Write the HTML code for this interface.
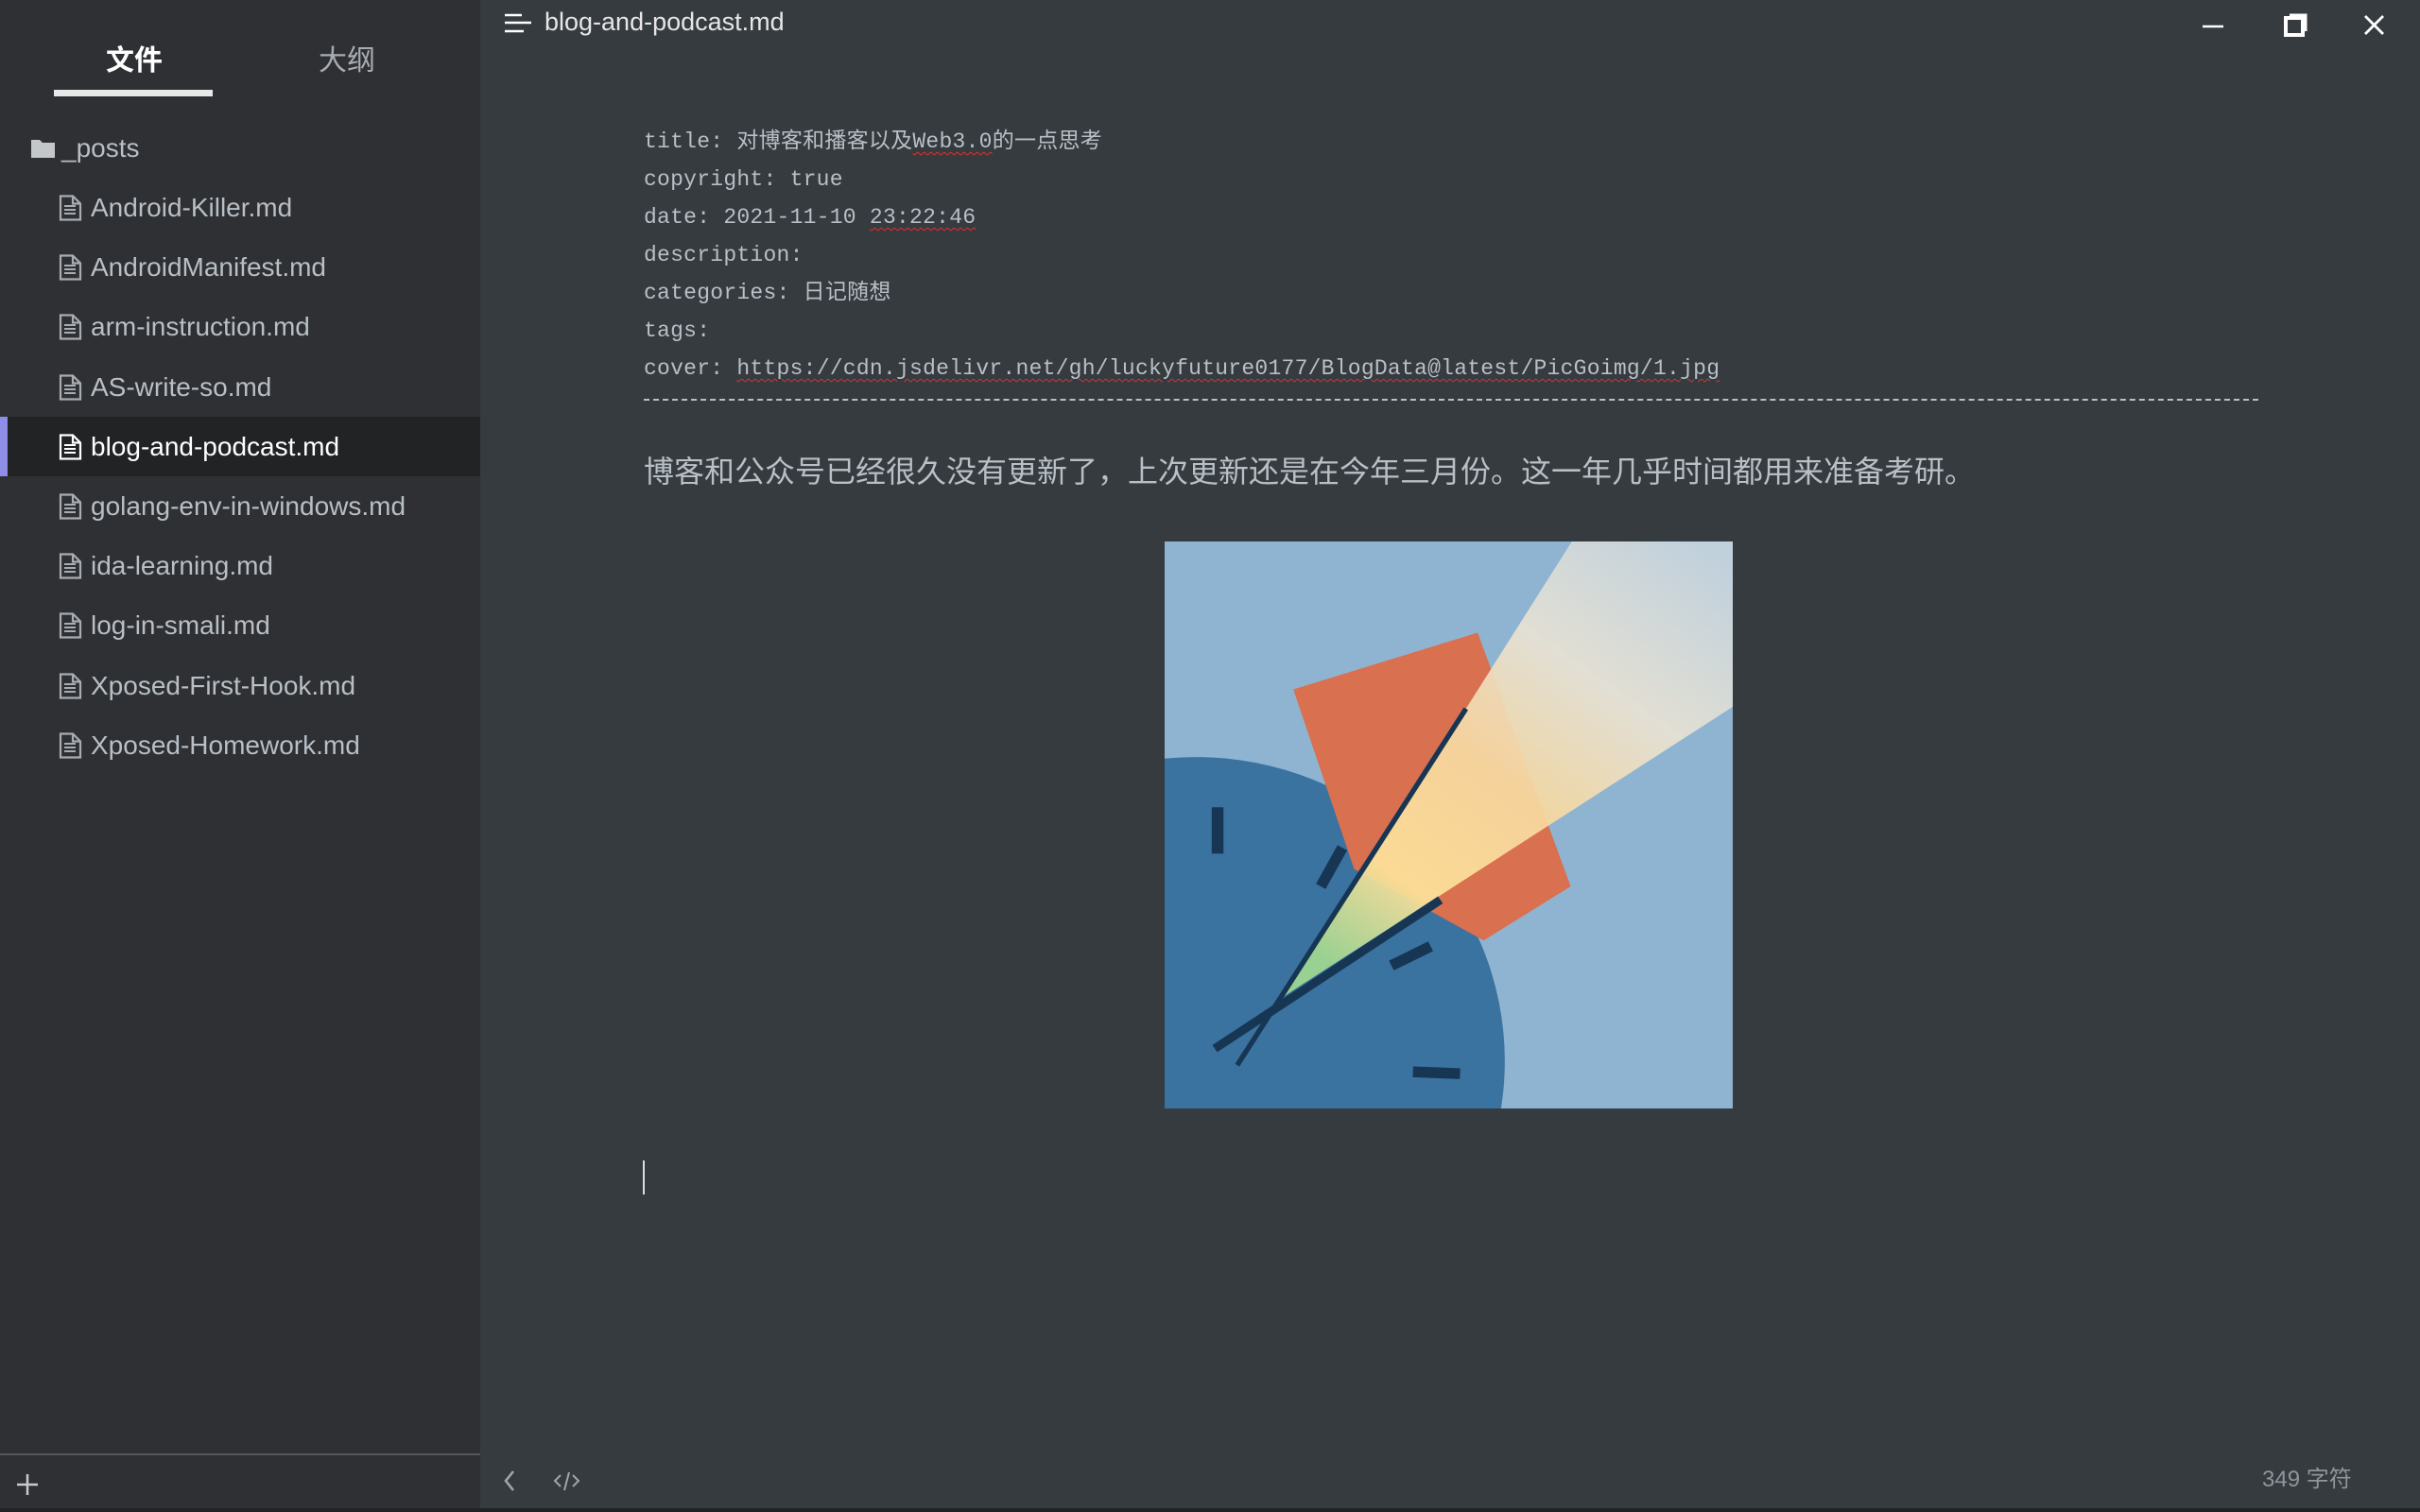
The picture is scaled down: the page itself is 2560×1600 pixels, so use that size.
<!DOCTYPE html>
<html><head><meta charset="utf-8"><style>
*{margin:0;padding:0;box-sizing:border-box}
html,body{width:2560px;height:1600px;overflow:hidden;background:#363b40;font-family:"Liberation Sans","Noto Sans CJK SC",sans-serif}
#side{position:absolute;left:0;top:0;width:508px;height:1600px;background:#2e3033}
.tab{position:absolute;top:43px;font-size:30px;line-height:44px}
#ul{position:absolute;left:57px;top:95px;width:168px;height:7px;background:#e8e8e8}
.it{position:absolute;left:0;width:508px;height:63px;font-size:28px;color:#b8bfc6;line-height:63px}
.it svg{position:absolute;left:62px;top:18px}
.it span{position:absolute;left:96px}
.act{background:#222325;color:#fff}
.act:before{content:"";position:absolute;left:0;top:0;width:8px;height:63px;background:#8e8ee6}
#sep{position:absolute;left:0;top:1538px;width:508px;height:2px;background:#55585c}
#bot{position:absolute;left:0;top:1596px;width:2560px;height:4px;background:#212326}
.fm{position:absolute;left:681px;font-family:"Liberation Mono","Noto Sans CJK SC",monospace;font-size:23px;color:#b8bfc6;line-height:30px;letter-spacing:0.25px}
.sq{text-decoration:underline wavy #e03030;text-decoration-thickness:1px;text-underline-offset:4px}
</style></head><body>
<div id="side">
<div class="tab" style="left:112px;color:#fff;font-weight:bold">文件</div>
<div class="tab" style="left:337px;color:#a8adb3">大纲</div>
<div id="ul"></div>
<svg style="position:absolute;left:32px;top:145px" width="28" height="24"><path d="M1 3 h9 l3 3 h13 v16 h-25z" fill="#c4c7ca"/></svg>
<div style="position:absolute;left:65px;top:140px;font-size:28px;color:#b8bfc6;line-height:34px">_posts</div>
<div id="items"></div>
<div id="sep"></div>
<svg style="position:absolute;left:16px;top:1558px" width="26" height="26"><path d="M13 2v22M2 13h22" stroke="#c8cbce" stroke-width="2.5"/></svg>
</div>
<script>
var n=["Android-Killer.md","AndroidManifest.md","arm-instruction.md","AS-write-so.md","blog-and-podcast.md","golang-env-in-windows.md","ida-learning.md","log-in-smali.md","Xposed-First-Hook.md","Xposed-Homework.md"];
var h="";
for(var i=0;i<n.length;i++){var c=i==4?"#fff":"#a8adb3";
h+='<div class="it'+(i==4?' act':'')+'" style="top:'+(188+i*63.2)+'px"><svg width="26" height="28"><path d="M2 1.5h13l8 8v17h-21z M15 1.5v8h8" fill="none" stroke="'+c+'" stroke-width="2.2"/><path d="M6 12h12M6 16h12M6 20h12" stroke="'+c+'" stroke-width="2"/></svg><span>'+n[i]+'</span></div>';}
document.getElementById("items").innerHTML=h;
</script>
<svg style="position:absolute;left:533px;top:13px" width="30" height="24"><path d="M1 3h18M1 11h28M1 20h20" stroke="#fff" stroke-width="2.4"/></svg>
<div style="position:absolute;left:576px;top:6px;font-size:27px;color:#e6e6e6;line-height:34px">blog-and-podcast.md</div>
<svg style="position:absolute;left:2330px;top:14px" width="210" height="26"><path d="M0 14h22" stroke="#fff" stroke-width="2.5"/><rect x="88" y="5" width="18" height="18" fill="none" stroke="#fff" stroke-width="4"/><path d="M92 2h17v17" fill="none" stroke="#fff" stroke-width="3"/><path d="M172 3l19 19M191 3l-19 19" stroke="#fff" stroke-width="2.8"/></svg>
<div class="fm" style="top:135px">title: 对博客和播客以及<span class="sq">Web3.0</span>的一点思考</div>
<div class="fm" style="top:175px">copyright: true</div>
<div class="fm" style="top:215px">date: 2021-11-10 <span class="sq">23:22:46</span></div>
<div class="fm" style="top:255px">description:</div>
<div class="fm" style="top:295px">categories: 日记随想</div>
<div class="fm" style="top:335px">tags:</div>
<div class="fm" style="top:375px">cover: <span class="sq">https://cdn.jsdelivr.net/gh/luckyfuture0177/BlogData@latest/PicGoimg/1.jpg</span></div>
<div style="position:absolute;left:681px;top:422px;width:1708px;border-top:2px dashed #b8bfc6"></div>
<div style="position:absolute;left:681px;top:477px;font-size:32px;color:#b8bfc6;line-height:44px;white-space:nowrap">博客和公众号已经很久没有更新了，上次更新还是在今年三月份。这一年几乎时间都用来准备考研。</div>
<svg style="position:absolute;left:1232px;top:573px" width="601" height="600" viewBox="0 0 1448 1468" preserveAspectRatio="none">
<defs><linearGradient id="g" x1="0.2" y1="1" x2="0.9" y2="0"><stop offset="0" stop-color="#9fd890"/><stop offset="0.2" stop-color="#fde29a"/><stop offset="0.45" stop-color="#f7d9a0"/><stop offset="0.7" stop-color="#e8e2d4"/><stop offset="1" stop-color="#c5d3dd"/></linearGradient></defs>
<rect width="1448" height="1468" fill="#8fb4d2"/>
<circle cx="80" cy="1345" r="787" fill="#3a72a0"/>
<polygon points="328,383 798,236 1035,893 813,1033 483,848" fill="#d9704f"/>
<polygon points="303,1178 1038,0 1448,0 1448,428" fill="url(#g)" opacity="0.93"/>
<g stroke="#173654" stroke-linecap="butt">
<path d="M768 433L185 1356" stroke-width="13"/>
<path d="M703 928L128 1313" stroke-width="22"/>
<path d="M135 688v120" stroke-width="30"/>
<path d="M453 793l-55 100" stroke-width="28"/>
<path d="M678 1048l-100 50" stroke-width="28"/>
<path d="M633 1373l120 5" stroke-width="28"/>
</g></svg>
<div style="position:absolute;left:680px;top:1228px;width:2px;height:36px;background:#ddd"></div>
<svg style="position:absolute;left:530px;top:1554px" width="100" height="26"><path d="M13 3l-8 10 8 10" fill="none" stroke="#a0a5aa" stroke-width="2.6"/><path d="M63 7l-6 6 6 6M76 7l6 6-6 6M72 4l-5 19" fill="none" stroke="#a0a5aa" stroke-width="2"/></svg>
<div style="position:absolute;left:2393px;top:1551px;font-size:24px;color:#8f959b;line-height:30px">349 字符</div>
<div id="bot"></div>
</body></html>
